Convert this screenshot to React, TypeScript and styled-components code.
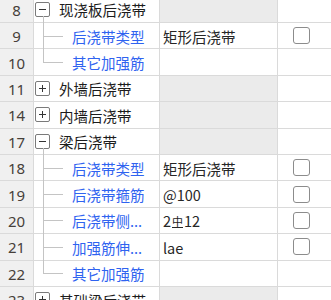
import React from 'react';
import styled, { createGlobalStyle, css } from 'styled-components';

type RowKind = 'group' | 'child';

interface TreeRow {
  id: number;
  kind: RowKind;
  label: string;
  expanded?: boolean;
  value?: React.ReactNode;
  checkbox?: boolean;
  last?: boolean;
}

const GlobalStyle = createGlobalStyle`
  html, body {
    margin: 0;
    padding: 0;
    background: #ffffff;
    overflow: hidden;
  }
  body {
    font-family: "Noto Sans CJK SC", "Noto Sans", sans-serif;
  }
`;

const ROW_H = 26.4;
const LINE = '#dadada';
const TREE = '#c4c4c4';

const Table = styled.div`
  width: 331px;
  margin-top: -3.4px;
  display: flex;
  flex-direction: column;
`;

const Row = styled.div`
  display: grid;
  grid-template-columns: 34px 126px 118px 1fr;
  height: ${ROW_H}px;
`;

const Cell = styled.div`
  position: relative;
  display: flex;
  align-items: center;
  border-right: 1px solid ${LINE};
  border-bottom: 1px solid ${LINE};
  box-sizing: border-box;
  min-width: 0;
`;

const NumCell = styled(Cell)`
  justify-content: center;
  background: #f0f0f0;
  font-family: "Noto Sans", "Open Sans", sans-serif;
  font-size: 15px;
  color: #463f3a;
  padding-top: 1px;
`;

const NameCell = styled(Cell)<{ $kind: RowKind; $last?: boolean; $expanded?: boolean }>`
  padding-left: ${(p) => (p.$kind === 'group' ? 1 : 38)}px;
  ${(p) =>
    p.$kind === 'child' &&
    css`
      &::before {
        content: '';
        position: absolute;
        left: 9px;
        top: -1px;
        width: 1px;
        height: ${p.$last ? 'calc(50% + 1px)' : 'calc(100% + 1px)'};
        background: ${TREE};
      }
      &::after {
        content: '';
        position: absolute;
        left: 9px;
        top: 50%;
        width: 20px;
        height: 1px;
        background: ${TREE};
      }
    `}
  ${(p) =>
    p.$kind === 'group' &&
    p.$expanded &&
    css`
      &::before {
        content: '';
        position: absolute;
        left: 9px;
        top: calc(50% + 7px);
        width: 1px;
        bottom: -1px;
        background: ${TREE};
      }
    `}
`;

const ValueCell = styled(Cell)<{ $shaded?: boolean }>`
  padding-left: 3px;
  background: ${(p) => (p.$shaded ? '#ebebeb' : '#ffffff')};
  font-size: 14.5px;
  color: #262626;
`;

const CheckCell = styled(Cell)`
  border-right: none;
  padding-left: 15px;
`;

const Toggle = styled.span`
  width: 15px;
  height: 15px;
  box-sizing: border-box;
  border: 1px solid #7a7a7a;
  border-radius: 2px;
  display: inline-flex;
  align-items: center;
  justify-content: center;
  background: #fff;
  margin-right: 9px;
  flex: none;
`;

const Label = styled.span<{ $kind: RowKind }>`
  font-size: 14.5px;
  white-space: nowrap;
  overflow: hidden;
  color: ${(p) => (p.$kind === 'child' ? '#2f63f0' : '#1c1c1c')};
  padding-top: 1px;
`;

const CheckBox = styled.span`
  width: 17px;
  height: 17px;
  box-sizing: border-box;
  border: 1.5px solid #8c8c8c;
  border-radius: 3px;
  background: #fff;
`;

const Rebar = styled.span`
  display: inline-block;
  font-size: 11px;
  margin: 0 1px;
  border-bottom: 1px solid #262626;
  line-height: 11px;
  transform: translateY(-1px);
`;

const ValueText = styled.span`
  padding-top: 1px;
  white-space: nowrap;
`;

const ToggleIcon = ({ expanded }: { expanded?: boolean }) => (
  <svg width="9" height="9" viewBox="0 0 9 9">
    <line x1="1" y1="4.5" x2="8" y2="4.5" stroke="#333" strokeWidth="1" />
    {!expanded && <line x1="4.5" y1="1" x2="4.5" y2="8" stroke="#333" strokeWidth="1" />}
  </svg>
);

const rows: TreeRow[] = [
  { id: 8, kind: 'group', label: '现浇板后浇带', expanded: true },
  { id: 9, kind: 'child', label: '后浇带类型', value: '矩形后浇带', checkbox: true },
  { id: 10, kind: 'child', label: '其它加强筋', last: true },
  { id: 11, kind: 'group', label: '外墙后浇带' },
  { id: 14, kind: 'group', label: '内墙后浇带' },
  { id: 17, kind: 'group', label: '梁后浇带', expanded: true },
  { id: 18, kind: 'child', label: '后浇带类型', value: '矩形后浇带', checkbox: true },
  { id: 19, kind: 'child', label: '后浇带箍筋', value: '@100', checkbox: true },
  {
    id: 20,
    kind: 'child',
    label: '后浇带侧...',
    value: (
      <>
        2<Rebar>中</Rebar>12
      </>
    ),
    checkbox: true,
  },
  { id: 21, kind: 'child', label: '加强筋伸...', value: 'lae', checkbox: true },
  { id: 22, kind: 'child', label: '其它加强筋', last: true },
  { id: 23, kind: 'group', label: '基础梁后浇带' },
];

const App: React.FC = () => {
  return (
    <>
      <GlobalStyle />
      <Table>
        {rows.map((r) => (
          <Row key={r.id}>
            <NumCell>{r.id}</NumCell>
            <NameCell $kind={r.kind} $last={r.last} $expanded={r.expanded}>
              {r.kind === 'group' ? (
                <Toggle>
                  <ToggleIcon expanded={r.expanded} />
                </Toggle>
              ) : null}
              <Label $kind={r.kind}>{r.label}</Label>
            </NameCell>
            <ValueCell $shaded={r.kind === 'group'}>
              {r.value ? <ValueText>{r.value}</ValueText> : null}
            </ValueCell>
            <CheckCell>{r.checkbox ? <CheckBox /> : null}</CheckCell>
          </Row>
        ))}
      </Table>
    </>
  );
};

export default App;
